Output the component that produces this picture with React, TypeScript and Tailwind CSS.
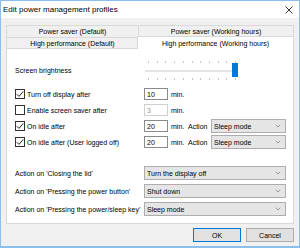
import { ChevronDown } from 'lucide-react'

const font = { fontFamily: '"Liberation Sans", Arial, sans-serif' }

function CheckBox({ checked }: { checked: boolean }) {
  return (
    <span className="w-[10px] h-[10px] border border-[#333] bg-white flex items-center justify-center shrink-0">
      {checked && (
        <svg width="8" height="8" viewBox="0 0 8 8" fill="none">
          <path d="M0.8 4.2 L3 6.4 L7.2 1.4" stroke="#222" strokeWidth="1" />
        </svg>
      )}
    </span>
  )
}

function Select({ value, className }: { value: string; className: string }) {
  return (
    <div
      className={`h-[14px] bg-[#e5e5e5] border border-[#adadad] flex items-center justify-between pl-[2px] pr-[3px] ${className}`}
    >
      <span>{value}</span>
      <ChevronDown className="w-[8px] h-[8px] text-[#555]" strokeWidth={1.5} />
    </div>
  )
}

function MinInput({ value, disabled }: { value: string; disabled?: boolean }) {
  return (
    <div
      className={`w-[24px] h-[12px] bg-white border flex items-center pl-[2px] ${
        disabled ? 'border-[#cfcfcf] text-[#9a9a9a]' : 'border-[#8a8a8a] text-black'
      }`}
    >
      {value}
    </div>
  )
}

function Slider() {
  const ticks = Array.from({ length: 11 }, (_, i) => 4 + i * 8.7)
  return (
    <svg width="96" height="24" viewBox="0 0 96 24">
      <rect x="1" y="12" width="90" height="2" fill="#e4e4e4" />
      {ticks.map((x, i) => (
        <g key={i}>
          <rect x={Math.round(x)} y="3" width="1" height="2" fill="#c8c8c8" />
          <rect x={Math.round(x)} y="20" width="1" height="2" fill="#c8c8c8" />
        </g>
      ))}
      <rect x="88" y="5" width="6" height="14" fill="#0078d7" />
    </svg>
  )
}

export default function App() {
  const idleRows = [
    { label: 'Turn off display after', checked: true, value: '10' },
    { label: 'Enable screen saver after', checked: false, value: '3', disabled: true },
    { label: 'On idle after', checked: true, value: '20', action: true },
    { label: 'On idle after (User logged off)', checked: true, value: '20', action: true },
  ]
  const actions = [
    { label: "Action on 'Closing the lid'", value: 'Turn the display off' },
    { label: "Action on 'Pressing the power button'", value: 'Shut down' },
    { label: "Action on 'Pressing the power/sleep key'", value: 'Sleep mode' },
  ]

  return (
    <div
      style={font}
      className="w-[300px] h-[248px] flex flex-col bg-[#f0f0f0] border border-[#8dbfec] border-b-2 text-[7px] leading-none text-black overflow-hidden"
    >
      {/* Title bar */}
      <div className="h-[17px] bg-white flex items-center justify-between pl-[2px] pr-[6px] shrink-0">
        <span className="text-[8px]">Edit power management profiles</span>
        <svg width="8" height="8" viewBox="0 0 8 8">
          <path d="M0.5 0.5 L7.5 7.5 M7.5 0.5 L0.5 7.5" stroke="#222" strokeWidth="0.9" />
        </svg>
      </div>

      <div className="flex flex-col px-[5px] pt-[7px]">
        {/* Tabs */}
        <div className="flex h-[12px]">
          <div className="w-[133px] border border-b-0 border-[#d9d9d9] bg-[#f0f0f0] flex items-center justify-center">
            Power saver (Default)
          </div>
          <div className="flex-1 -ml-px border border-b-0 border-[#d9d9d9] bg-[#f0f0f0] flex items-center justify-center">
            Power saver (Working hours)
          </div>
        </div>
        <div className="flex h-[11px] items-end">
          <div className="w-[133px] h-[11px] border border-b-0 border-[#d9d9d9] bg-[#f0f0f0] flex items-center justify-center">
            High performance (Default)
          </div>
          <div className="relative z-10 flex-1 -ml-[2px] h-[13px] -mb-px border border-b-0 border-[#d9d9d9] bg-white flex items-center justify-center">
            High performance (Working hours)
          </div>
        </div>

        {/* Panel */}
        <div className="h-[176px] border border-[#d9d9d9] bg-white pl-[8px] pr-[7px] pt-[9px] flex flex-col">
          <div className="flex items-center h-[24px]">
            <span className="w-[129px]">Screen brightness</span>
            <Slider />
          </div>

          <div className="flex flex-col mt-[4px]">
            {idleRows.map((r) => (
              <div key={r.label} className="flex items-center h-[16px]">
                <div className="w-[129px] flex items-center gap-[2px]">
                  <CheckBox checked={r.checked} />
                  <span>{r.label}</span>
                </div>
                <MinInput value={r.value} disabled={r.disabled} />
                <span className="ml-[3px] w-[17px]">min.</span>
                {r.action && (
                  <>
                    <span className="w-[23px]">Action</span>
                    <Select value="Sleep mode" className="flex-1" />
                  </>
                )}
              </div>
            ))}
          </div>

          <div className="flex flex-col mt-[14px]">
            {actions.map((a) => (
              <div key={a.label} className="flex items-center h-[18px]">
                <span className="w-[129px] whitespace-nowrap">{a.label}</span>
                <Select value={a.value} className="flex-1" />
              </div>
            ))}
          </div>
        </div>

        {/* Buttons */}
        <div className="flex justify-end gap-[5px] mt-[4px]">
          <button className="w-[48px] h-[14px] bg-[#e1e1e1] border border-[#0078d7] flex items-center justify-center">
            OK
          </button>
          <button className="w-[48px] h-[14px] bg-[#e1e1e1] border border-[#adadad] flex items-center justify-center">
            Cancel
          </button>
        </div>
      </div>
    </div>
  )
}
